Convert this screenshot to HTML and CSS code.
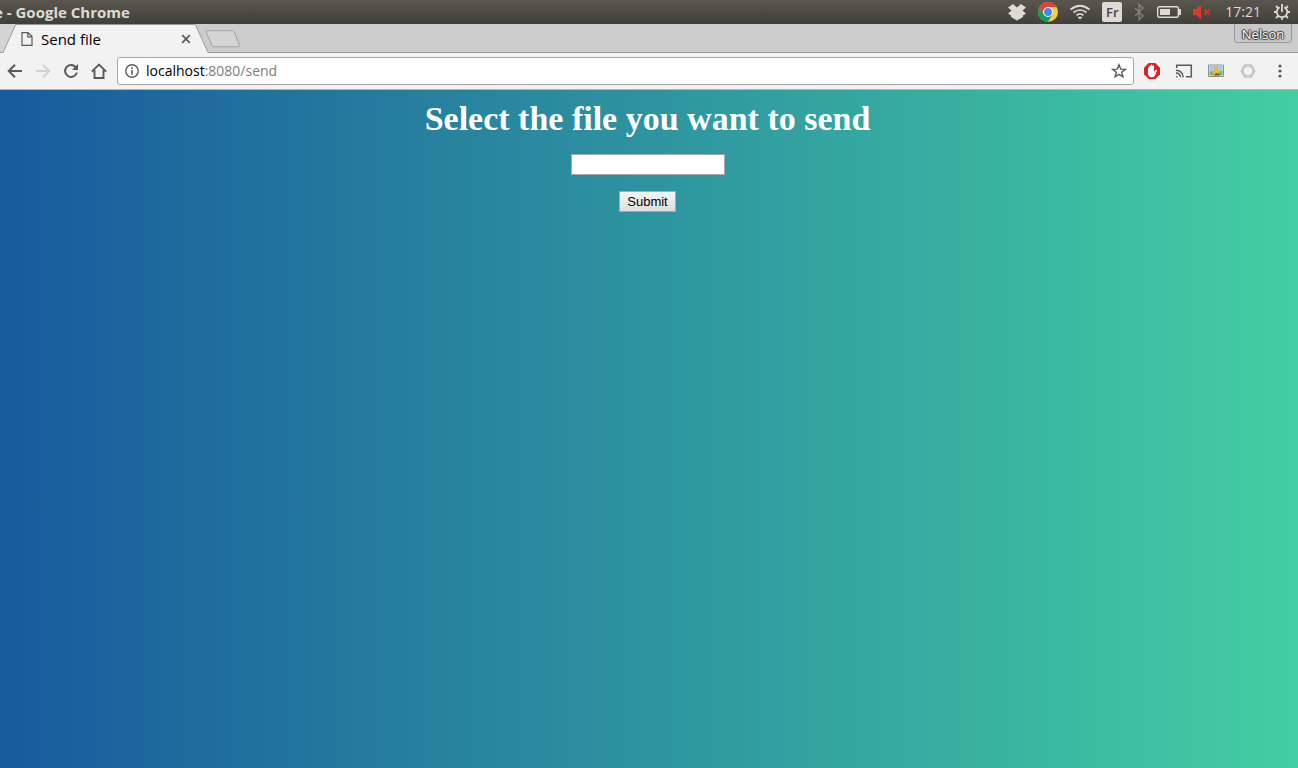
FILE: index.html
```html
<!DOCTYPE html>
<html lang="en">
<head>
<meta charset="utf-8">
<title>Send file</title>
<link rel="stylesheet" href="styles.css">
</head>
<body>
<header class="panel">
  <div class="panel-title">e - Google Chrome</div>
  <div class="indicators">
    <svg width="20" height="18" viewBox="0 0 20 18" fill="#dfdbd2"><path d="M6 1l4 3.500L14 1l5 3.500-3.500 3L19 10.500l-3 2V14l-6 3.500L4 14v-1.500l-3-2 3.500-3L1 4.500z"/></svg>
    <svg width="20" height="20" viewBox="0 0 20 20"><circle cx="10" cy="10" r="10" fill="#fbcb3e"/><path d="M10 10V5h8.660A10 10 0 0 0 1.340 5l4.330 7.500z" fill="#dc4437"/><path d="M1.340 5A10 10 0 0 0 10 20l4.330-7.500L10 15l-4.330-2.500z" fill="#159b5a"/><circle cx="10" cy="10" r="5" fill="#f3f3f3"/><circle cx="10" cy="10" r="3.900" fill="#4587ee"/></svg>
    <svg width="22" height="16" viewBox="0 0 22 16" fill="none" stroke="#dfdbd2" stroke-width="1.700"><path d="M1.500 5.500q9.500-7.500 19 0M4.500 8.500q6.500-5 13 0M7.500 11.300q3.500-2.600 7 0"/><path d="M8.800 13.200L11 15.500l2.200-2.300q-2.200-1.500-4.400 0z" fill="#dfdbd2" stroke="none"/></svg>
    <span class="layout-key">Fr</span>
    <svg width="12" height="18" viewBox="0 0 12 18" fill="none" stroke="#85827a" stroke-width="1.400"><path d="M2 5l8 8-4 3.500v-15L10 5l-8 8"/></svg>
    <svg width="26" height="12" viewBox="0 0 26 12"><rect x="1.700" y=".7" width="20.600" height="10.600" rx="1.500" fill="none" stroke="#dfdbd2" stroke-width="1.400"/><path d="M4 3h10v6H4zM23 3h2v6h-2z" fill="#dfdbd2"/></svg>
    <svg width="18" height="14" viewBox="0 0 18 14"><path d="M0 4h3l5-4v14l-5-4H0z" fill="#dc3b2d"/><path d="M11.500 4.500l5 5m0-5l-5 5" stroke="#c7392c" stroke-width="1.900"/></svg>
    <span class="clock">17:21</span>
    <svg width="18" height="18" viewBox="0 0 18 18" fill="none" stroke="#dfdbd2" stroke-width="1.800"><path d="M6.700 4.200a5.300 5.300 0 1 0 4.600 0M9 1v8M3 3l2 2m10-2l-2 2M1 9h2.500m11 0H17M3 15l2-2m10 2l-2-2M9 14.500V17"/></svg>
  </div>
</header>

<div class="tab-strip">
  <div class="tab">
    <svg class="tab-shape" width="212" height="29" viewBox="0 0 212 29"><path d="M0 0h15L3 28.500H0z" fill="#d4d4d4"/><path d="M2 29L15 2q.5-1.500 2-1.500h177q1.500 0 2 1.500l12.500 27z" fill="#f2f2f2"/><path d="M0 28.500h3L15 2q.5-1.500 2-1.500h177q1.500 0 2 1.500l12 26.500h4" fill="none" stroke="#999"/></svg>
    <svg class="page-icon" width="12" height="14" viewBox="0 0 12 14" fill="none" stroke="#5a5a5a" stroke-width="1.200"><path d="M1 .6h6l4 4v8.800H1zM6.800.6v4.200H11"/></svg>
    <span class="tab-name">Send file</span>
    <button class="icon-button tab-close" aria-label="Close tab"><svg width="10" height="10" viewBox="0 0 10 10" stroke="#5a5a5a" stroke-width="1.700"><path d="M1.200 1.200l7.600 7.600m0-7.600L1.200 8.800"/></svg></button>
  </div>
  <button class="icon-button new-tab" aria-label="New tab"><svg width="36" height="18" viewBox="0 0 36 18"><path d="M3 .7h24q1.500 0 2 1l5.500 13.500q.6 1.600-1 1.600H9q-1.500 0-2-1L1.300 2.200Q.8.7 3 .7z" fill="#d4d4d4" stroke="#a3a3a3"/></svg></button>
  <button class="profile">Nelson</button>
</div>

<nav class="toolbar">
  <button class="icon-button" aria-label="Back"><svg width="16" height="16" viewBox="0 0 16 16" fill="none" stroke="#5a5a5a" stroke-width="2"><path d="M15 8H2.500M8 1.700L1.700 8 8 14.300"/></svg></button>
  <button class="icon-button" aria-label="Forward"><svg width="16" height="16" viewBox="0 0 16 16" fill="none" stroke="#d2d2d2" stroke-width="2"><path d="M1 8h12.500M8 1.700L14.300 8 8 14.300"/></svg></button>
  <button class="icon-button" aria-label="Reload"><svg width="16" height="16" viewBox="0 0 16 16"><path d="M12.600 4A6 6 0 1 0 13.900 9.500" fill="none" stroke="#5a5a5a" stroke-width="2"/><path d="M15 1v6H9z" fill="#5a5a5a"/></svg></button>
  <button class="icon-button" aria-label="Home"><svg width="16" height="16" viewBox="0 0 16 16" fill="none" stroke="#5a5a5a" stroke-width="1.900"><path d="M.8 8.600L8 1.500l7.200 7.100M3.500 7v8h9V7"/></svg></button>
  <div class="omnibox">
    <svg width="14" height="14" viewBox="0 0 14 14"><circle cx="7" cy="7" r="6.200" fill="none" stroke="#5a5a5a" stroke-width="1.400"/><path d="M6.200 3.300h1.600v1.600H6.200zM6.200 6h1.600v4.700H6.200z" fill="#5a5a5a"/></svg>
    <a class="address" href="#">localhost<span class="address-rest">:8080/send</span></a>
    <button class="icon-button" aria-label="Bookmark this page"><svg width="16" height="16" viewBox="0 0 16 16" fill="none" stroke="#5a5a5a" stroke-width="1.400"><path d="M8 1.800l1.700 4.300 4.600.3-3.600 2.900 1.200 4.500L8 11.300l-3.900 2.500 1.200-4.500-3.600-2.900 4.600-.3z"/></svg></button>
  </div>
  <div class="extensions">
    <button class="icon-button" aria-label="Ad blocker"><svg width="16" height="16" viewBox="0 0 16 16"><path d="M4.700 0h6.600L16 4.700v6.600L11.300 16H4.700L0 11.300V4.700z" fill="#d9222a"/><path d="M4 8.500V4.800q.7-1 1.400 0V7V3q.8-1.200 1.500 0v3.500V2.200q.8-1.200 1.600 0v4.300V3q.8-1.100 1.500 0v6l1.200-1.800q1.200-.9 1.800.2L11 12.500q-.9 1.700-3 1.700-4 0-4-4z" fill="#fff"/></svg></button>
    <button class="icon-button" aria-label="Cast"><svg class="cast" width="18" height="14" viewBox="0 0 18 14" fill="none" stroke="#5a5a5a" stroke-width="1.500"><path d="M1.700 4V1.300h14.600v11.400H11M1 6.200A7 7 0 0 1 8.200 13.300M1 9a4.300 4.300 0 0 1 4.500 4.300"/><path d="M1 11.400l2 2H1z" fill="#5a5a5a" stroke="none"/></svg></button>
    <button class="icon-button" aria-label="Image viewer"><svg width="16" height="14" viewBox="0 0 16 14"><path d="M.5 1h15v11.500H.5z" fill="#eef2f2" stroke="#8b8f94"/><path d="M1.500 2h13v6h-13z" fill="#a8c9e9"/><path d="M1.500 8l4-1 4 1 5-1v4.500h-13z" fill="#91a969"/><path d="M6.500 2.500h3v3l3 1-2 4-4 .5-3-3 3-1z" fill="#e6c22e"/><path d="M8 9l4 1-1 1.500H6z" fill="#655d41"/></svg></button>
    <button class="icon-button" aria-label="Extension"><svg width="16" height="16" viewBox="0 0 16 16"><path d="M4.700 2.300h6.600L14.600 8l-3.300 5.700H4.700L1.400 8z" fill="#c6c6c6" stroke="#c6c6c6" stroke-width="2" stroke-linejoin="round"/><circle cx="8" cy="8" r="4.300" fill="#f2f2f2"/></svg></button>
    <button class="icon-button" aria-label="Menu"><svg width="16" height="14" viewBox="0 0 16 14" fill="#5a5a5a"><circle cx="8" cy="2" r="1.600"/><circle cx="8" cy="7" r="1.600"/><circle cx="8" cy="12" r="1.600"/></svg></button>
  </div>
</nav>

<main class="page">
  <h1 class="heading">Select the file you want to send</h1>
  <form class="send-form">
    <input class="file-field" type="text" aria-label="File to send">
    <button class="submit" type="submit">Submit</button>
  </form>
</main>
</body>
</html>
```
FILE: styles.css
```css
* {
  box-sizing: border-box;
}

body {
  margin: 0;
  min-height: 100vh;
  display: flex;
  flex-direction: column;
  font-family: "Open Sans", "Noto Sans", sans-serif;
  font-size: 14px;
  line-height: 20px;
}

button {
  font: inherit;
}

svg {
  display: block;
  flex: none;
}

.icon-button {
  display: flex;
  align-items: center;
  justify-content: center;
  padding: 0;
  border: 0;
  background: none;
}

.panel {
  display: flex;
  align-items: center;
  justify-content: space-between;
  height: 24px;
  padding-right: 7px;
  background: linear-gradient(#59574d, #403f3a);
  color: #dfdbd2;
}

.panel-title {
  margin-left: -6px;
  font-size: 15px;
  font-weight: bold;
}

.indicators {
  display: flex;
  align-items: center;
  gap: 11px;
}

.layout-key {
  width: 20px;
  height: 20px;
  border-radius: 2px;
  background: #dfdbd2;
  color: #45443f;
  font-size: 13px;
  font-weight: 600;
  text-align: center;
}

.clock {
  margin: 0 1px 0 3px;
}

.tab-strip {
  display: flex;
  height: 29px;
  background: #ccc;
  box-shadow: inset 0 -1px #999;
}

.tab {
  position: relative;
  display: flex;
  align-items: center;
  width: 205px;
  padding: 0 13px 0 21px;
}

.tab-shape {
  position: absolute;
  left: 0;
  top: 0;
}

.page-icon,
.tab-name,
.tab-close {
  position: relative;
}

.tab-name {
  flex: 1;
  margin-left: 8px;
  color: #000;
  font-size: 15px;
  line-height: 18px;
}

.tab-close {
  width: 12px;
  height: 12px;
}

.new-tab {
  height: 30px;
}

.profile {
  width: 58px;
  height: 19px;
  margin: 0 6px 0 auto;
  padding: 2px 0 0;
  border: 1px solid #999;
  border-top: 0;
  border-radius: 0 0 4px 4px;
  background: #c8c8c8;
  color: #fff;
  font-size: 13px;
  line-height: 16px;
  text-shadow: 0 1px 1px #333, 1px 0 1px #333, 0 -1px 1px #333, -1px 0 1px #333;
}

.toolbar {
  display: flex;
  align-items: center;
  gap: 12px;
  height: 37px;
  padding: 0 10px 0 7px;
  border-bottom: 1px solid #b5b5b5;
  background: #f2f2f2;
}

.omnibox {
  flex: 1;
  display: flex;
  align-items: center;
  gap: 7px;
  height: 28px;
  margin-left: -2px;
  padding: 0 6px 0 7px;
  border: 1px solid #a6a6a6;
  border-radius: 3px;
  background: #fff;
}

.address {
  flex: 1;
  color: #000;
  text-decoration: none;
}

.address-rest {
  color: #808080;
}

.extensions {
  display: flex;
  align-items: center;
  gap: 16px;
  margin-left: -2px;
}

.cast {
  margin: 0 -1px;
}

.page {
  flex: 1;
  display: flex;
  flex-direction: column;
  align-items: center;
  padding: 8px 11px 8px 8px;
  background: linear-gradient(to right, #185a9d, #43cea2);
}

.heading {
  margin: 0;
  color: #fff;
  font-family: "Liberation Serif", serif;
  font-size: 34px;
  line-height: 42px;
}

.send-form {
  display: flex;
  flex-direction: column;
  align-items: center;
  gap: 16px;
  margin-top: 14px;
}

.file-field {
  width: 154px;
  height: 21px;
  padding: 1px;
  border: 1px solid #a9a9a9;
  border-radius: 0;
  background: #fff;
}

.submit {
  height: 21px;
  padding: 0 7px;
  border: 1px solid #a9a9a9;
  background: linear-gradient(#f6f6f6, #ddd);
  color: #000;
  font-family: "Liberation Sans", sans-serif;
  font-size: 13px;
  line-height: 18px;
}
```
